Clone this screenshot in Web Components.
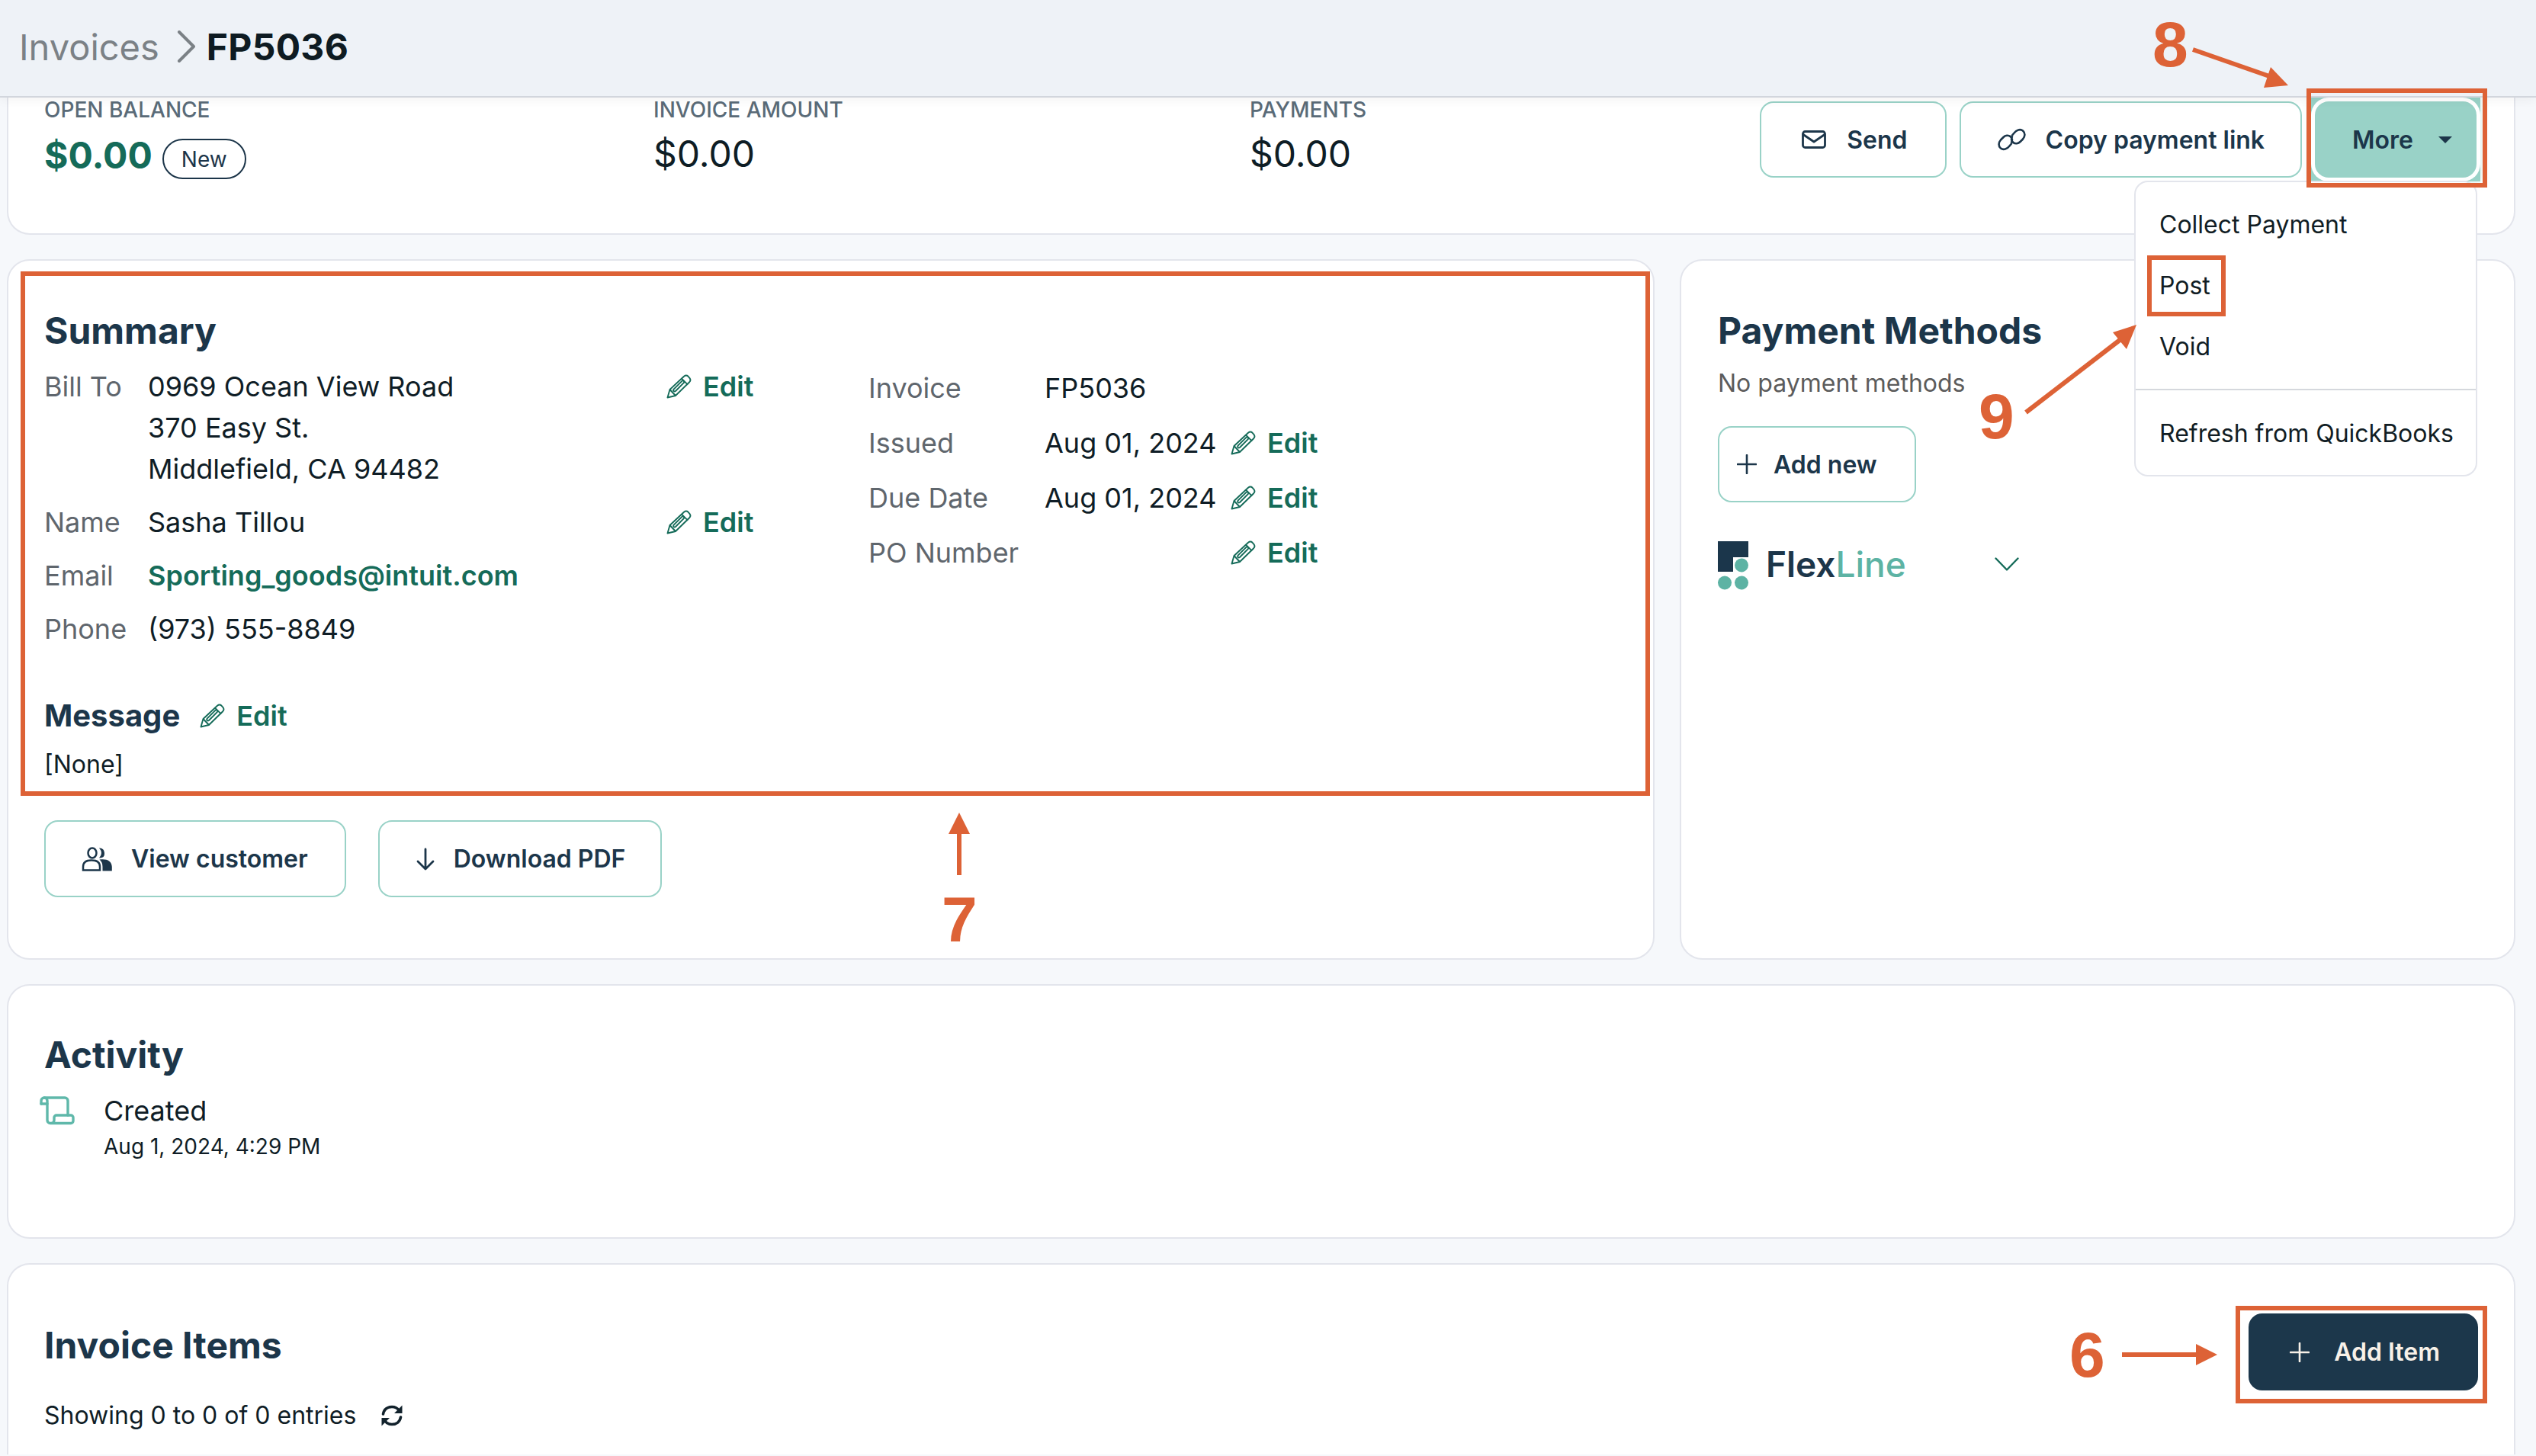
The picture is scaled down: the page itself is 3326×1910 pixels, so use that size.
<!DOCTYPE html>
<html lang="en">
<head>
<meta charset="utf-8">
<title>Invoice FP5036</title>
<style>
  html, body { margin: 0; padding: 0; background: #f6f8fb; }
  body { width: 3326px; height: 1910px; overflow: hidden; position: relative; font-family: Inter, "Liberation Sans", sans-serif; color: #0f1d26; }
</style>
</head>
<body>
<invoice-page></invoice-page>
<anno-layer></anno-layer>

<script>
const define = ( name, markup ) => {
  customElements.define( name, class extends HTMLElement {
    constructor() {
      super();
      const template = document.createElement( 'template' );
      template.innerHTML = markup;
      this.attachShadow( { mode: 'open' } );
      this.shadowRoot.appendChild( template.content.cloneNode( true ) );
    }
  } );
};

const NAVY = '#1c364a';
const GREEN = '#156b59';
const TEAL = '#99d2c7';

// Icons
const ICON_PENCIL = `<svg width="33" height="32" viewBox="0 0 33 32" fill="none" stroke="${GREEN}" stroke-width="1.9" stroke-linejoin="round"><path d="M1.5 30.5 4.5 20 23 2.8q3-2.4 5.6 0l1.8 2q2.2 2.8-.2 5.4L12 28z"/><path d="M4.5 20 12 28M20 5.6l8 8"/><path d="M9.6 19.6 20.4 8.8q1.4-1 2.4 0t0 2.4L12 22q-1.400 1-2.400 0t0-2.400z"/></svg>`;

// Generic card
define( 'ui-card', `
  <style>
    :host {
      background: #ffffff;
      border: solid 2px #e3e5ec;
      border-radius: 30px;
      box-sizing: border-box;
      display: block;
    }
  </style>
  <slot></slot>
` );

// Button, outline by default
define( 'ui-button', `
  <style>
    :host {
      align-items: center;
      background: #ffffff;
      border: solid 2.5px ${TEAL};
      border-radius: 18px;
      box-sizing: border-box;
      color: ${NAVY};
      display: inline-flex;
      flex: none;
      font-size: 32px;
      font-weight: 600;
      gap: var( --gap, 26px );
      height: var( --height, 100px );
      padding: 0 var( --pad-right, 48px ) 0 var( --pad-left, 48px );
      white-space: nowrap;
    }
    :host( [variant=primary] ) {
      background: #1c374b;
      border-color: #1c374b;
      color: #f8f1e8;
    }
    :host( [variant=active] ) {
      background: ${TEAL};
      border-color: ${TEAL};
      box-shadow: 0 0 0 5px #ffffff;
    }
    ::slotted( svg ) {
      display: block;
      flex: none;
    }
  </style>
  <slot name="icon"></slot>
  <slot></slot>
  <slot name="after"></slot>
` );

define( 'edit-link', `
  <style>
    :host {
      align-items: center;
      align-self: var( --edit-align, start );
      color: ${GREEN};
      display: inline-flex;
      font-size: 36px;
      font-weight: 600;
      gap: 15px;
      line-height: 54px;
    }
    svg { display: block; flex: none; }
  </style>
  ${ICON_PENCIL}
  <span>Edit</span>
` );

define( 'section-title', `
  <style>
    :host {
      color: ${NAVY};
      display: block;
      font-size: 48px;
      font-weight: 700;
      line-height: 58px;
      white-space: nowrap;
    }
  </style>
  <slot></slot>
` );

define( 'app-header', `
  <style>
    :host {
      align-items: center;
      background: #eef2f7;
      border-bottom: solid 2px #d2d6dd;
      box-shadow: 0 3px 14px rgba( 0, 0, 0, 0.05 );
      box-sizing: border-box;
      display: flex;
      font-size: 47px;
      height: 128px;
      padding: 0 0 4px 25px;
      position: relative;
      z-index: 3;
    }
    .crumb { color: #7b8186; }
    .current { color: #0e1b22; font-size: 48px; font-weight: 700; letter-spacing: 0.3px; }
    svg { display: block; margin: 0 13px 0 23px; }
  </style>
  <span class="crumb">Invoices</span>
  <svg width="26" height="42" viewBox="0 0 26 42" fill="none" stroke="#7b8186" stroke-width="4" stroke-linecap="round" stroke-linejoin="round"><path d="M3 2l19 19L3 40"/></svg>
  <span class="current">FP5036</span>
` );

define( 'stat-block', `
  <style>
    :host {
      display: block;
    }
    .label {
      color: #5a6b78;
      font-size: 28px;
      font-weight: 500;
      line-height: 30px;
      white-space: nowrap;
    }
    .value {
      margin-top: 14px;
    }
  </style>
  <div class="label"><slot name="label"></slot></div>
  <div class="value"><slot></slot></div>
` );

define( 'drop-menu', `
  <style>
    :host {
      background: #ffffff;
      border: solid 2px #e3e5ec;
      border-radius: 18px;
      box-sizing: border-box;
      color: #111d24;
      display: block;
      font-size: 32px;
      padding: 15px 0;
      position: absolute;
      right: 48px;
      top: 109px;
      width: 450px;
      z-index: 4;
    }
    .item {
      align-items: center;
      display: flex;
      height: 80px;
      padding-left: 31px;
      white-space: nowrap;
    }
    hr {
      background: #d5d8dd;
      border: none;
      height: 2px;
      margin: 16px 0;
    }
  </style>
  <div class="item">Collect Payment</div>
  <div class="item">Post</div>
  <div class="item">Void</div>
  <hr>
  <div class="item">Refresh from QuickBooks</div>
` );

define( 'balance-card', `
  <style>
    :host {
      display: block;
      position: relative;
      z-index: 2;
    }
    ui-card {
      border-radius: 0 0 30px 30px;
      border-top: none;
      height: 180px;
      padding: 1px 0 0 47px;
      position: relative;
    }
    .row { display: flex; }
    .stats { display: flex; flex: 1; }
    stat-block:nth-child( 1 ) { width: 799px; }
    stat-block:nth-child( 2 ) { width: 782px; }
    .plain { color: #0e1d25; font-size: 48px; line-height: 58px; }
    .open { align-items: center; display: flex; gap: 13px; margin-top: 6px; }
    .amount { color: ${GREEN}; font-size: 48px; font-weight: 700; line-height: 58px; }
    .badge {
      align-items: center;
      border: solid 2.5px #1c3549;
      border-radius: 27px;
      box-sizing: border-box;
      color: #1c3549;
      display: flex;
      font-size: 28px;
      height: 53px;
      justify-content: center;
      margin-top: 9px;
      width: 110px;
    }
    .actions {
      align-items: flex-start;
      display: flex;
      gap: 17px;
      margin: 4px 49px 0 0;
    }
    .more-ring {
      background: ${TEAL};
      box-shadow: 0 0 12px rgba( 153, 210, 199, 0.45 );
      display: block;
      margin: -5px -5px 0 -5px;
      padding: 5px;
    }
    .caret { display: block; }
  </style>
  <ui-card>
    <div class="row">
      <div class="stats">
        <stat-block>
          <span slot="label">OPEN BALANCE</span>
          <div class="open"><span class="amount">$0.00</span><span class="badge">New</span></div>
        </stat-block>
        <stat-block>
          <span slot="label">INVOICE AMOUNT</span>
          <div class="plain">$0.00</div>
        </stat-block>
        <stat-block>
          <span slot="label">PAYMENTS</span>
          <div class="plain">$0.00</div>
        </stat-block>
      </div>
      <div class="actions">
        <ui-button style="--pad-left: 53px; --pad-right: 49px; --gap: 27px;">
          <svg slot="icon" width="32" height="24" viewBox="0 0 32 24" fill="none" stroke="currentColor" stroke-width="2.8" stroke-linejoin="round"><rect x="1.500" y="1.500" width="29" height="21" rx="3"/><path d="M2 5.500l14 9.500 14-9.500"/></svg>
          Send
        </ui-button>
        <ui-button style="--pad-left: 48px; --pad-right: 47px; --gap: 26px;">
          <svg slot="icon" width="37" height="30" viewBox="0 0 37 30" fill="none" stroke="currentColor" stroke-width="2.600" stroke-linecap="round"><path d="M19 9.500 21.500 6.500C24.500 2.500 29.500 0.800 33 3.500 36.500 6.500 36 11 33 14.500L29.500 18C27 20.500 23 21 20.500 19"/><path d="M18 20.500 15.500 23.500C12.500 27.500 7.500 29.200 4 26.500 0.500 23.500 1 19 4 15.500L7.500 12C10 9.500 14 9 16.500 11"/><path d="M20.500 19C17.500 17 17.500 13.500 19 11.500M16.500 11C19.500 13 19.500 16.500 18 18.500"/></svg>
          Copy payment link
        </ui-button>
        <span class="more-ring">
          <ui-button variant="active" style="--pad-left: 47px; --pad-right: 30px; --gap: 33px; --height: 100px;">
            More
            <svg slot="after" class="caret" width="18" height="9" viewBox="0 0 18 9" fill="${NAVY}"><path d="M0 0h18L9 9z"/></svg>
          </ui-button>
        </span>
      </div>
    </div>
    <drop-menu></drop-menu>
  </ui-card>
` );

define( 'summary-card', `
  <style>
    :host { display: block; min-width: 0; }
    ui-card { height: 919px; padding: 63px 0 0 47px; }
    .details { display: flex; margin-top: 17px; }
    .grid-left {
      align-content: start;
      display: grid;
      grid-template-columns: 136px 680px auto;
      row-gap: 16px;
      width: 1081px;
    }
    .grid-right {
      align-content: start;
      display: grid;
      grid-template-columns: 231px 244px auto;
      margin-top: 2px;
      row-gap: 18px;
    }
    .label { color: #5f666d; }
    .label, .value { font-size: 36px; line-height: 54px; white-space: nowrap; }
    .value { color: #0f1d26; }
    .mail { color: ${GREEN}; font-weight: 600; }
    .message-head { --edit-align: center; align-items: center; display: flex; gap: 26px; margin-top: 57px; }
    .message-title { color: ${NAVY}; font-size: 40px; font-weight: 700; line-height: 60px; }
    .none { color: #0f1d26; font-size: 32px; line-height: 48px; margin-top: 10px; }
    .buttons { display: flex; gap: 42px; margin-top: 49px; }
  </style>
  <ui-card>
    <section-title>Summary</section-title>
    <div class="details">
      <div class="grid-left">
        <div class="label">Bill To</div>
        <div class="value">0969 Ocean View Road<br>370 Easy St.<br>Middlefield, CA 94482</div>
        <edit-link></edit-link>
        <div class="label">Name</div>
        <div class="value">Sasha Tillou</div>
        <edit-link></edit-link>
        <div class="label">Email</div>
        <div class="value mail">Sporting_goods@intuit.com</div>
        <div></div>
        <div class="label">Phone</div>
        <div class="value">(973) 555-8849</div>
        <div></div>
      </div>
      <div class="grid-right">
        <div class="label">Invoice</div>
        <div class="value">FP5036</div>
        <div></div>
        <div class="label">Issued</div>
        <div class="value">Aug 01, 2024</div>
        <edit-link></edit-link>
        <div class="label">Due Date</div>
        <div class="value">Aug 01, 2024</div>
        <edit-link></edit-link>
        <div class="label">PO Number</div>
        <div class="value"></div>
        <edit-link></edit-link>
      </div>
    </div>
    <div class="message-head">
      <span class="message-title">Message</span>
      <edit-link></edit-link>
    </div>
    <div class="none">[None]</div>
    <div class="buttons">
      <ui-button style="--pad-left: 47px; --pad-right: 48px; --gap: 25px; --height: 101px;">
        <svg slot="icon" width="40" height="32" viewBox="0 0 40 32" fill="none" stroke="currentColor" stroke-width="2.500"><ellipse cx="14" cy="8" rx="5.500" ry="6.500"/><path d="M2 30.500V26Q2 17.500 13 17.500 24 17.500 24 26V30.500z"/><path fill="currentColor" stroke="none" d="M23 1.500Q29.500 1 30 8T23 14.500Q26 11.500 26 8T23 1.500zM23.500 16.500Q39 15 39.800 26V31.500H27.500V26Q27.500 20 23.500 16.500z"/></svg>
        View customer
      </ui-button>
      <ui-button style="--pad-left: 48px; --pad-right: 46px; --gap: 25px; --height: 101px;">
        <svg slot="icon" width="24" height="30" viewBox="0 0 24 30" fill="none" stroke="currentColor" stroke-width="2.800" stroke-linecap="round" stroke-linejoin="round"><path d="M12 2v26M2 18l10 10 10-10"/></svg>
        Download PDF
      </ui-button>
    </div>
  </ui-card>
` );

define( 'flex-logo', `
  <style>
    :host { align-items: flex-start; display: flex; gap: 23px; }
    svg { display: block; flex: none; }
    .word {
      color: ${NAVY};
      font-size: 46px;
      font-weight: 600;
      line-height: 56px;
      margin-top: 2px;
    }
    .word b { color: #5db3a4; font-weight: 500; }
  </style>
  <svg width="40" height="64" viewBox="0 0 40 64">
    <path fill="#1b364b" d="M0 0H40V21H20V40H0z"/>
    <g fill="#5db3a4"><circle cx="31" cy="31.500" r="9"/><circle cx="9" cy="54.500" r="9"/><circle cx="31" cy="54.500" r="9"/></g>
  </svg>
  <span class="word">Flex<b>Line</b></span>
` );

define( 'payment-card', `
  <style>
    :host { display: block; min-width: 0; }
    ui-card { height: 919px; padding: 63px 0 0 48px; }
    .empty { color: #5c5c5c; font-size: 32px; line-height: 48px; margin-top: 16px; }
    ui-button { margin-top: 32px; }
    .provider { align-items: flex-start; display: flex; margin-top: 51px; position: relative; }
    .chevron { display: block; margin: 21px 0 0 116px; }
  </style>
  <ui-card>
    <section-title>Payment Methods</section-title>
    <div class="empty">No payment methods</div>
    <ui-button style="--pad-left: 23px; --pad-right: 49px; --gap: 22px;">
      <svg slot="icon" width="26" height="26" viewBox="0 0 26 26" fill="none" stroke="currentColor" stroke-width="2.600" stroke-linecap="round"><path d="M13 1v24M1 13h24"/></svg>
      Add new
    </ui-button>
    <div class="provider">
      <flex-logo></flex-logo>
      <svg class="chevron" width="32" height="18" viewBox="0 0 32 18" fill="none" stroke="${GREEN}" stroke-width="2.400" stroke-linecap="round" stroke-linejoin="round"><path d="M1.500 1.500 16 16.500 30.500 1.500"/></svg>
    </div>
  </ui-card>
` );

define( 'activity-card', `
  <style>
    :host { display: block; }
    ui-card { height: 334px; padding: 62px 0 0 47px; }
    .entry { display: flex; margin-top: 25px; }
    svg { display: block; flex: none; margin: 0 38px 0 -6px; }
    .what { color: #0f1d26; font-size: 36px; line-height: 54px; margin-top: -8px; }
    .when { color: #0f1d26; font-size: 28px; line-height: 42px; margin-top: -1px; }
  </style>
  <ui-card>
    <section-title>Activity</section-title>
    <div class="entry">
      <svg width="46" height="38" viewBox="0 0 46 38" fill="none" stroke="#5fb8aa" stroke-width="3.400" stroke-linejoin="round" stroke-linecap="round"><path d="M2 10V6a4 4 0 0 1 8 0V31.500a4 4 0 0 0 4 4H41a3 3 0 0 0 3-3V28a3 3 0 0 0-3-3H22a3 3 0 0 0-3 3V31.500a4 4 0 0 1-4 4"/><path d="M6 2H33a4 4 0 0 1 4 4V25"/><path d="M2 10H10"/></svg>
      <div>
        <div class="what">Created</div>
        <div class="when">Aug 1, 2024, 4:29 PM</div>
      </div>
    </div>
  </ui-card>
` );

define( 'items-card', `
  <style>
    :host { display: block; }
    ui-card {
      border-bottom: none;
      border-radius: 30px 30px 0 0;
      height: 251px;
      padding: 64px 47px 0 47px;
    }
    .row { align-items: flex-start; display: flex; justify-content: space-between; }
    section-title { margin-top: 13px; }
    .entries {
      align-items: center;
      color: #0f1d26;
      display: flex;
      font-size: 32px;
      gap: 32px;
      line-height: 48px;
      margin-top: 39px;
    }
    svg { display: block; }
  </style>
  <ui-card>
    <div class="row">
      <div>
        <section-title>Invoice Items</section-title>
        <div class="entries">
          <span>Showing 0 to 0 of 0 entries</span>
          <svg width="30" height="28" viewBox="0 0 30 28" fill="none" stroke="#12222c" stroke-width="3.600" stroke-linecap="round"><path d="M3.500 12C4.500 6 9 2.500 15 2.500 19 2.500 22.500 4.500 24.500 7.500"/><path d="M26.500 16C25.500 22 21 25.500 15 25.500 11 25.500 7.500 23.500 5.500 20.500"/><path fill="#12222c" stroke="none" d="M28.500 0.500V11H18zM1.500 27.500V17H12z"/></svg>
        </div>
      </div>
      <ui-button variant="primary" style="--pad-left: 52px; --pad-right: 48px; --gap: 32px; --height: 101px;">
        <svg slot="icon" width="26" height="26" viewBox="0 0 26 26" fill="none" stroke="currentColor" stroke-width="2.600" stroke-linecap="round"><path d="M13 1v24M1 13h24"/></svg>
        Add Item
      </ui-button>
    </div>
  </ui-card>
` );

define( 'invoice-page', `
  <style>
    :host { display: block; }
    .content {
      display: flex;
      flex-direction: column;
      gap: 32px;
      padding: 0 27px 0 9px;
    }
    .columns {
      display: grid;
      gap: 33px;
      grid-template-columns: 2161px 1096px;
    }
  </style>
  <app-header></app-header>
  <div class="content">
    <balance-card></balance-card>
    <div class="columns">
      <summary-card></summary-card>
      <payment-card></payment-card>
    </div>
    <activity-card></activity-card>
    <items-card></items-card>
  </div>
` );

// Step annotations, drawn over the page
const markers = [
  [ '6', 2714, 1729 ],
  [ '7', 1235, 1158 ],
  [ '8', 2823, 10 ],
  [ '9', 2595, 498 ]
];

define( 'anno-layer', `
  <style>
    :host {
      height: 1910px;
      left: 0;
      pointer-events: none;
      position: absolute;
      top: 0;
      width: 3326px;
      z-index: 10;
    }
    svg { display: block; left: 0; position: absolute; top: 0; }
    span {
      color: #dd6236;
      font-family: "Liberation Sans", Arial, sans-serif;
      font-size: 84px;
      font-weight: 700;
      line-height: 96px;
      position: absolute;
    }
  </style>
  <svg width="3326" height="1910" viewBox="0 0 3326 1910" fill="none" stroke="#dd6236" stroke-width="6">
    <rect x="30" y="359" width="2131" height="682"/>
    <rect x="3028" y="119" width="231" height="124"/>
    <rect x="2819" y="338" width="97" height="74"/>
    <rect x="2935" y="1716" width="324" height="122"/>
    <path d="M1258 1148V1092"/>
    <path fill="#dd6236" stroke="none" d="M1258 1066 1272 1094H1244z"/>
    <path d="M2783 1777H2882"/>
    <path fill="#dd6236" stroke="none" d="M2908 1777 2880 1791V1763z"/>
    <path d="M2876 65 2982 102"/>
    <path fill="#dd6236" stroke="none" d="M3001 112 2969 115 2978 88z"/>
    <path d="M2657 541 2788 440"/>
    <path fill="#dd6236" stroke="none" d="M2802 426 2789 458 2771 436z"/>
  </svg>
  ${markers.map( ( m ) => `<span style="left: ${m[1]}px; top: ${m[2]}px;">${m[0]}</span>` ).join( '' )}
` );
</script>
</body>
</html>
